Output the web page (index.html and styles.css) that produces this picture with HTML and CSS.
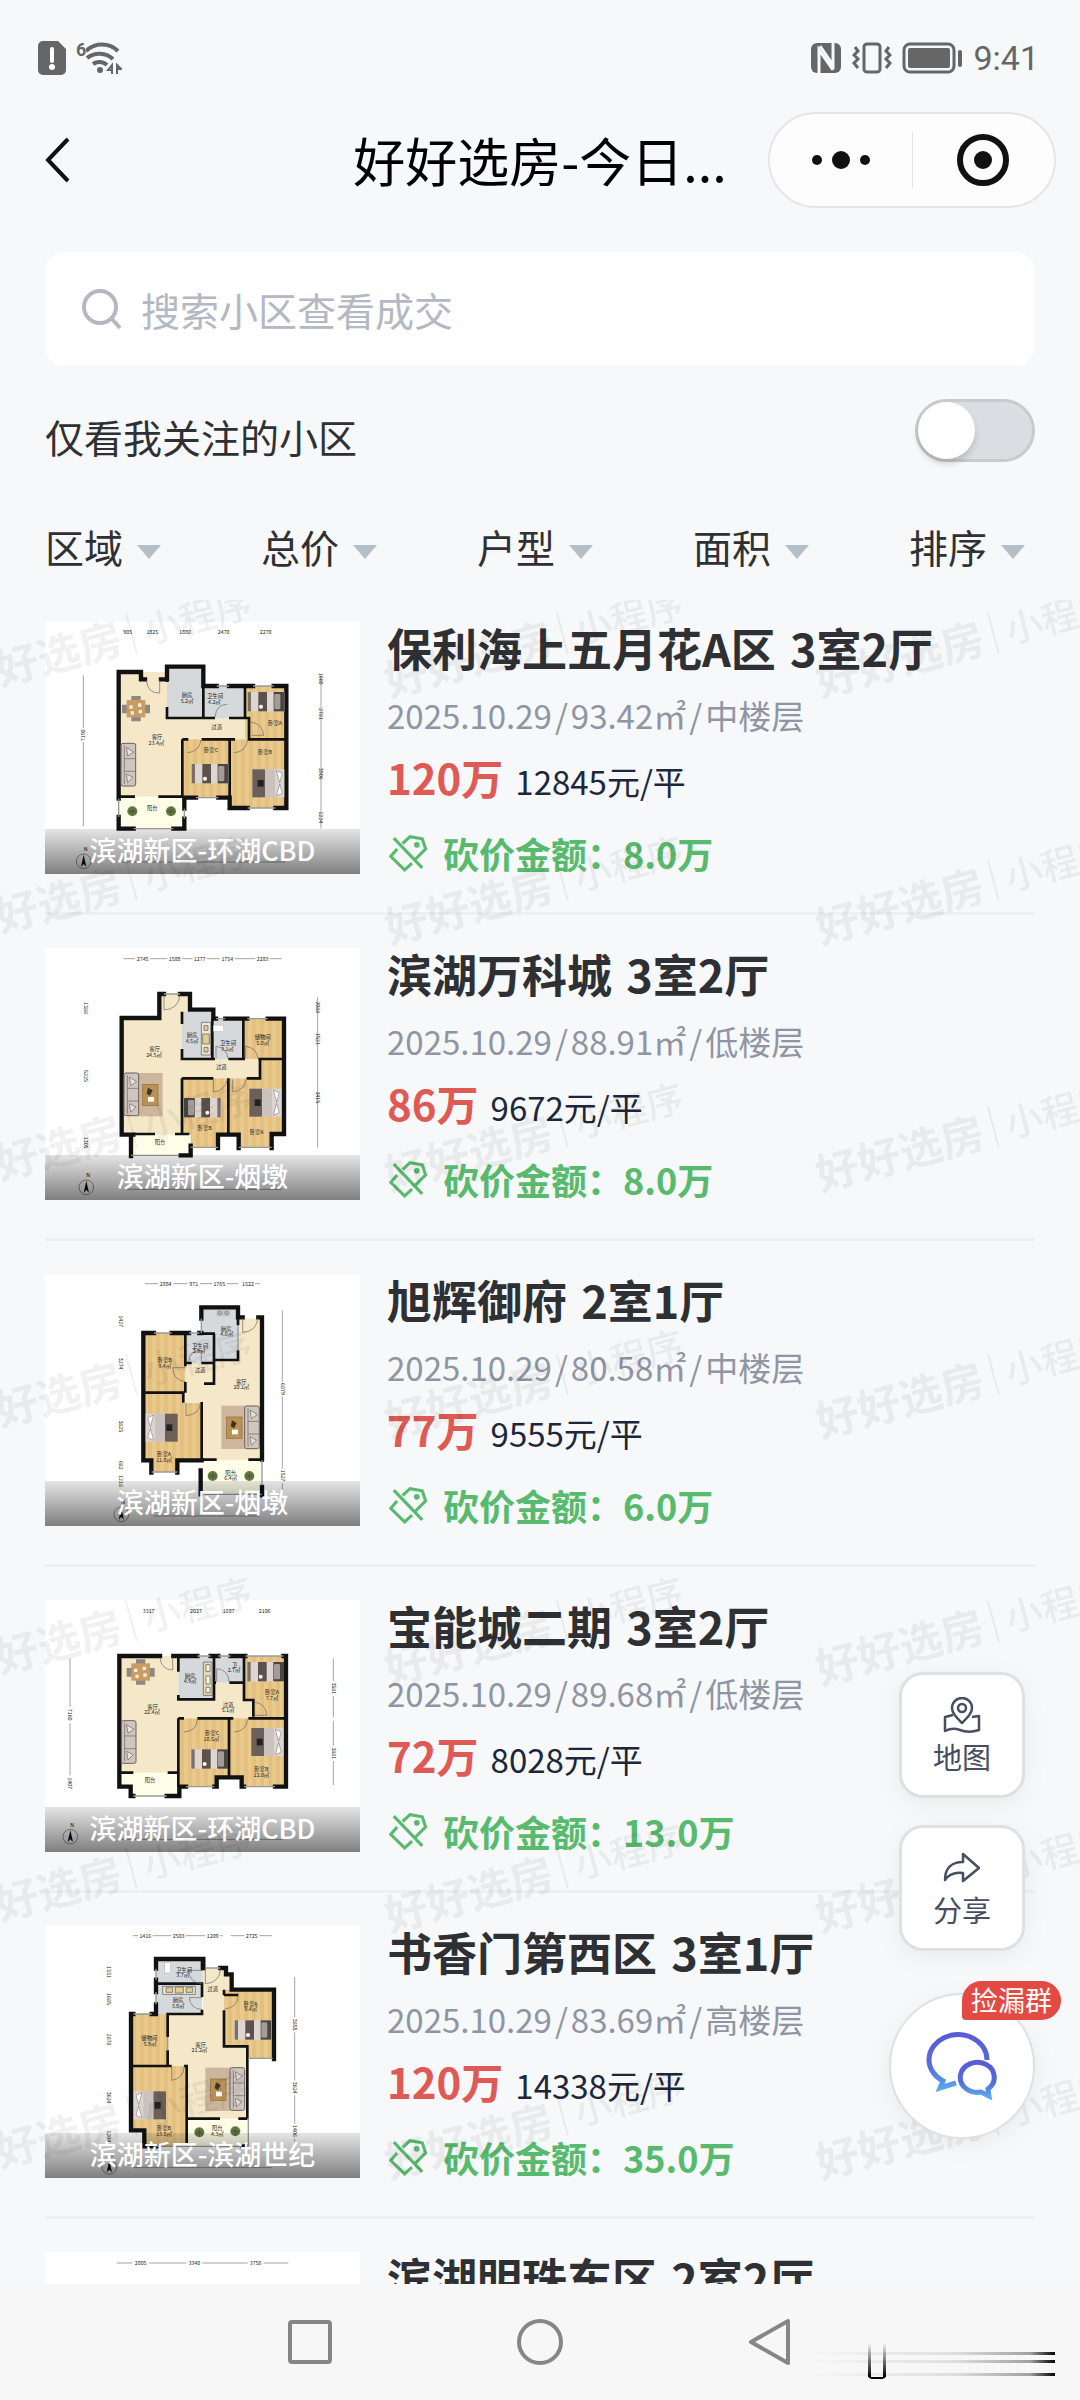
FILE: index.html
```html
<!DOCTYPE html>
<html lang="zh-CN">
  <head>
    <meta charset="UTF-8" />
    <meta name="viewport" content="width=device-width, initial-scale=1.0" />
    <title>好好选房</title>

    <link rel="stylesheet" href="styles.css">
  </head>

  <body>
    <!-- shared drawings for the floor plans -->
    <svg class="defs" aria-hidden="true">
      <defs>
        <linearGradient id="chat-color" x1="0" y1="0" x2="0" y2="1">
          <stop offset="0" stop-color="#5a5cd6" />
          <stop offset="0.6" stop-color="#566bdc" />
          <stop offset="1" stop-color="#58a6ee" />
        </linearGradient>
        <pattern id="wood" width="24" height="60" patternUnits="userSpaceOnUse">
          <rect width="24" height="60" fill="#e4c080" />
          <rect width="12" height="60" fill="#e9c98c" />
        </pattern>
        <g id="bed-s">
          <rect width="112" height="58" fill="#ddd5d1" />
          <rect x="2" width="10" height="58" fill="#7c6f66" />
          <rect x="34" width="26" height="58" fill="#5d524b" />
          <circle cx="42" cy="44" r="6" fill="#fff" />
          <rect x="80" width="32" height="58" fill="#4a4442" />
          <rect x="82" y="6" width="18" height="46" rx="4" fill="#a39c98" />
        </g>
        <g id="bed-l">
          <rect width="96" height="84" fill="#ddd5d1" />
          <rect width="38" height="84" fill="#6b5f57" />
          <rect x="16" y="32" width="18" height="20" fill="#222" />
          <rect x="38" width="30" height="84" fill="#c9c2be" />
          <path d="M72 4l18 8-8 28zM72 80l18-8-8-28z" fill="#fff" stroke="#8a8480" stroke-width="2" />
        </g>
        <g id="sofa">
          <rect width="44" height="128" rx="6" fill="#cfc6c0" stroke="#6a605b" stroke-width="3" />
          <path d="M10 6v116M10 46h34M10 84h34" stroke="#6a605b" stroke-width="2" />
          <path d="M16 12l22 14-18 12zM16 92l20 10-16 16z" fill="#e8e0db" stroke="#6a605b" stroke-width="2" />
        </g>
        <g id="dining">
          <path d="M28 0h28v76H28zM0 26h84v26H0z" fill="#8f8781" />
          <rect x="14" y="12" width="56" height="52" fill="#c99c62" />
          <path d="M22 28h10v10H22zM48 22h10v10H48zM26 46h10v10H26zM50 42h10v10H50z" fill="#f6ead8" />
        </g>
        <g id="rug">
          <rect width="76" height="130" fill="#cdb79c" />
          <rect x="16" y="34" width="46" height="64" fill="#bd9155" stroke="#8d6a3c" stroke-width="2" />
          <path d="M32 44l14 8-8 16-10-6z" fill="#3d352c" />
          <rect x="32" y="72" width="18" height="14" fill="#fff" />
        </g>
        <g id="plant">
          <circle r="15" fill="#6e7f4c" />
          <path d="M-10-8L10 8M10-8L-10 8M0-13V13M-13 0H13" stroke="#4c5c33" stroke-width="3" />
        </g>
        <g id="compass">
          <circle r="22" class="arc" />
          <path d="M0-20L8 16 0 8-8 16z" fill="#111" />
          <text y="-30">N</text>
        </g>
      </defs>
    </svg>

    <div class="status-bar">
      <div class="status-group">
        <svg width="28" height="34" viewBox="0 0 28 34"><path d="M5 0h15l8 8v21a5 5 0 0 1-5 5H5a5 5 0 0 1-5-5V5a5 5 0 0 1 5-5z" fill="#666" /><path d="M14 8v12" stroke="#fff" stroke-width="4" stroke-linecap="round" /><circle cx="14" cy="26" r="3" fill="#fff" /></svg>
        <div class="wifi">
          <span>6</span>
          <svg width="36" height="34" viewBox="9 0 36 34">
            <g fill="none" stroke="#666" stroke-width="4"><path d="M9 10a23 23 0 0 1 32 0M10 17a20 20 0 0 1 26 1M16 23a11 11 0 0 1 14 1" /></g>
            <circle cx="23" cy="29" r="3" fill="#666" /><path d="M35 33v-9l-4 5h5M40 33v-9l4 4h-4" fill="none" stroke="#666" stroke-width="2" />
          </svg>
        </div>
      </div>
      <div class="status-group">
        <svg width="31" height="32" viewBox="0 0 31 32"><rect y="1" width="30" height="30" rx="6" fill="#666" /><path d="M8 32V8l14 20M9 4l13 19V0" fill="none" stroke="#f7f8fa" stroke-width="3" /></svg>
        <svg width="40" height="32" viewBox="0 0 40 32" fill="none" stroke="#666" stroke-width="3"><rect x="12" y="2" width="16" height="28" rx="3" /><path d="M3 5l3 4-4 4 4 4-4 4 4 5M37 5l-3 4 4 4-4 4 4 4-4 5" /></svg>
        <svg width="61" height="32" viewBox="0 0 61 32"><rect x="2" y="2" width="50" height="28" rx="6" fill="none" stroke="#666" stroke-width="3" /><rect x="6" y="6" width="42" height="20" rx="2" fill="#666" /><path d="M58 10v13" stroke="#666" stroke-width="4" stroke-linecap="round" /></svg>
        <span class="time">9:41</span>
      </div>
    </div>

    <header class="header">
      <button class="back-button" aria-label="返回">
        <svg width="28" height="48" viewBox="0 0 28 48"><path d="M24 3L4 24l20 21" fill="none" stroke="#111" stroke-width="4" /></svg>
      </button>
      <h1 class="title">好好选房-今日...</h1>
      <div class="capsule">
        <button aria-label="更多">
          <svg width="60" height="20" viewBox="0 0 60 20" fill="#111"><circle cx="6" cy="10" r="5" /><circle cx="30" cy="10" r="9" /><circle cx="54" cy="10" r="5" /></svg>
        </button>
        <button aria-label="关闭">
          <svg width="54" height="54" viewBox="0 0 54 54"><circle cx="27" cy="27" r="23" fill="none" stroke="#111" stroke-width="6" /><circle cx="27" cy="27" r="9" fill="#111" /></svg>
        </button>
      </div>
    </header>

    <label class="search">
      <svg width="42" height="42" viewBox="0 0 42 42" fill="none" stroke="#b3b8c2" stroke-width="4"><circle cx="19" cy="19" r="16" /><path d="M31 31l8 9" /></svg>
      <input type="text" placeholder="搜索小区查看成交" aria-label="搜索小区">
    </label>

    <div class="follow-row">
      <label for="follow">仅看我关注的小区</label>
      <input class="switch" type="checkbox" id="follow">
    </div>

    <nav class="filters">
      <button>区域</button>
      <button>总价</button>
      <button>户型</button>
      <button>面积</button>
      <button>排序</button>
    </nav>

    <main class="main">
      <ul class="list">
        <li class="house">
          <figure class="photo">
            <svg class="plan" viewBox="0 0 945 756">
              <path class="cream" d="M221 150H366V288H612V352H412V524H221z" />
              <path class="tile" d="M366 134H475V288H366zM475 192H600V288H475z" />
              <path class="wood" d="M600 192H724V352H600zM412 352H554V527H412zM554 352H724V558H554z" />
              <path class="balcony" d="M221 524H417V620H221z" />
              <path class="wall" d="M221 530V150H288V172H300M348 172H366V134H475V192H515M552 192H624M686 192H724V558H691M608 558H554V527H520M453 527H418V560M418 590V620H385M266 620H221V585" />
              <path class="inner" d="M366 134V180M366 255V288H475V134M475 288H510M552 288H600V192M600 288H612V352H724M412 352H430M470 352H570M412 352V524H340M221 524H270M554 352V527" />
              <path class="window" d="M515 192H552M624 192H686M608 558H691M453 527H520M266 620H385M221 530V585M418 560V590" />
              <path class="arc" d="M304 175q4 40 40 38v-38M510 285q4-38 36-38M428 392q34-2 40-38M568 392q34-2 40-38M618 300q34 4 38 40h-36" />
              <use href="#dining" x="231" y="222" />
              <use href="#sofa" x="228" y="364" />
              <use href="#bed-s" x="606" y="210" />
              <use href="#bed-s" x="438" y="426" />
              <use href="#bed-l" x="622" y="442" />
              <use href="#plant" x="262" y="568" />
              <use href="#plant" x="378" y="568" />
              <text x="336" y="350">客厅</text><text x="334" y="370">23.4㎡</text>
              <text x="426" y="226">厨房</text><text x="426" y="244">5.2㎡</text>
              <text x="510" y="228">卫生间</text><text x="508" y="246">4.2㎡</text>
              <text x="515" y="322">过道</text><text x="690" y="310">卧室A</text>
              <text x="498" y="390">卧室C</text><text x="660" y="396">卧室B</text><text x="322" y="564">阳台</text>
              <text x="248" y="36">905</text><text x="322" y="36">1825</text><text x="420" y="36">1880</text><text x="536" y="36">2470</text><text x="662" y="36">2270</text>
              <path class="ruler" d="M115 160V318M115 360V612M828 160V620" />
              <text transform="translate(120 340) rotate(-90)">7190</text><text transform="translate(822 170) rotate(90)">1660</text><text transform="translate(822 276) rotate(90)">2781</text><text transform="translate(822 455) rotate(90)">3906</text><text transform="translate(822 586) rotate(90)">1224</text>
              <path class="ruler" d="M230 720H720" />
              <use href="#compass" x="116" y="718" />
            </svg>
            <figcaption>滨湖新区-环湖CBD</figcaption>
          </figure>
          <div class="info">
            <h2>保利海上五月花A区 <span>3室2厅</span></h2>
            <p class="meta">2025.10.29<i>/</i>93.42㎡<i>/</i>中楼层</p>
            <p class="price"><strong>120万</strong>12845元/平</p>
            <p class="cut"><svg class="tag" viewBox="0 0 112 112"><path d="M14 12L98 100M40 28L62 8l36 6 10 30-32 32M24 44L5 66l41 40 22-20" /><circle cx="82" cy="32" r="4" /></svg>砍价金额：8.0万</p>
          </div>
        </li>

        <li class="house">
          <figure class="photo">
            <svg class="plan" viewBox="135 52 945 756">
              <path class="cream" d="M365 262H484V190H570V243H546V385H780V443H546V612H365z" />
              <path class="tile" d="M546 243H637V385H546zM637 265H730V385H637z" />
              <path class="wood" d="M730 265H850V385H730zM546 443H685V612H654V650H572V612H546zM685 443H780V385H850V610H815V650H716V612H685z" />
              <path class="balcony" d="M393 612H568V675H393z" />
              <path class="wall" d="M400 612H365V262H478V190H492M540 190H570V237H640V264H648M676 264H742M803 264H852V610H815V652M716 652V612H654V652M572 645V674H542M393 676V612" />
              <path class="inner" d="M546 243V280M546 355V385H645M685 385H735M775 385H850M637 264V385M730 264V385M780 385V443H740M546 443H640M685 443V612M546 443V610M400 610H465M525 610H568" />
              <path class="window" d="M492 190H540M648 264H676M742 264H803M572 650H654M716 650H815M393 674H536" />
              <path class="arc" d="M492 192v46q44-2 48-46M640 446v38q36-4 42-38M698 446v38q36-4 40-38M648 383v-36q32 4 36 36M736 383v-36q34 4 38 36" />
              <use href="#rug" x="412" y="427" />
              <use href="#sofa" x="372" y="427" />
              <path d="M604 275h28v98h-28z" fill="#ece8dc" stroke="#555" stroke-width="2" />
              <path d="M612 285h12v14h-12zM608 310h20v30h-20zM612 350h12v14h-12z" fill="#e6cf8d" stroke="#555" stroke-width="2" />
              <rect x="640" y="284" width="30" height="18" fill="#fff" stroke="#aaa" />
              <use href="#bed-s" transform="translate(664 502) scale(-1 1)" />
              <use href="#bed-l" x="748" y="474" />
              <text x="464" y="362">客厅</text><text x="462" y="378">24.5㎡</text>
              <text x="576" y="320">厨房</text><text x="576" y="336">4.5㎡</text>
              <text x="684" y="344">卫生间</text><text x="682" y="360">3.1㎡</text>
              <text x="788" y="326">储物间</text><text x="788" y="342">5.0㎡</text>
              <text x="664" y="414">过道</text><text x="614" y="598">卧室B</text><text x="770" y="610">卧室A</text><text x="480" y="640">阳台</text>
              <path class="ruler" d="M370 84H405M450 84H502M546 84H578M620 84H660M704 84H766M810 84H845M953 200V650M380 776H845" />
              <text x="428" y="90">2745</text><text x="524" y="90">1588</text><text x="599" y="90">1277</text><text x="682" y="90">1754</text><text x="788" y="90">2283</text>
              <text transform="translate(252 232) rotate(90)">1388</text><text transform="translate(252 436) rotate(90)">5225</text><text transform="translate(252 636) rotate(90)">1305</text>
              <text transform="translate(947 230) rotate(90)">2088</text><text transform="translate(947 325) rotate(90)">1521</text><text transform="translate(947 500) rotate(90)">3415</text>
              <use href="#compass" x="259" y="770" />
            </svg>
            <figcaption>滨湖新区-烟墩</figcaption>
          </figure>
          <div class="info">
            <h2>滨湖万科城 <span>3室2厅</span></h2>
            <p class="meta">2025.10.29<i>/</i>88.91㎡<i>/</i>低楼层</p>
            <p class="price"><strong>86万</strong>9672元/平</p>
            <p class="cut"><svg class="tag" viewBox="0 0 112 112"><path d="M14 12L98 100M40 28L62 8l36 6 10 30-32 32M24 44L5 66l41 40 22-20" /><circle cx="82" cy="32" r="4" /></svg>砍价金额：8.0万</p>
          </div>
        </li>

        <li class="house">
          <figure class="photo">
            <svg class="plan" viewBox="135 71 945 756">
              <path class="cream" d="M556 340H645V330H714V205H786V628H605V460H556z" />
              <path class="tile" d="M604 171H714V330H645V248H604zM556 250H642V340H556z" />
              <path class="wood" d="M430 248H556V427H430zM430 427H550V458H605V630H532V665H455V630H430z" />
              <path class="balcony" d="M605 630H786V732H605z" />
              <path class="wall" d="M430 427V248H462M515 248H567M598 248H604M604 205V171H714V201H728M775 201H786V628M430 427V630H454V667M532 667V630H605M602 660V732M786 710V735" />
              <path class="inner" d="M430 427H550V457M556 250V348M556 395V427M560 338H575M604 338H642V400H612M645 250H600M642 250V338M642 329H714V300M605 455V630M605 628H650M745 628H786M714 201V225" />
              <path class="window" d="M604 205V248M462 248H515M567 248H598M714 225V300M455 665H532M605 732H786M786 630V705" />
              <path class="arc" d="M728 202v44q42-2 46-44M556 352h-38q2 38 38 42M558 458v38q38-2 44-38M566 336q2-36 38-36v36" />
              <path d="M650 180h40v18h-40z" fill="#bfc3c6" /><circle cx="659" cy="188" r="5" class="arc" /><circle cx="680" cy="188" r="5" class="arc" />
              <use href="#rug" x="664" y="466" />
              <use href="#sofa" x="734" y="467" />
              <use href="#bed-l" transform="translate(533 490) scale(-1 1)" />
              <use href="#plant" x="638" y="677" />
              <use href="#plant" x="748" y="677" />
              <text x="494" y="336">卧室B</text><text x="494" y="354">9.4㎡</text>
              <text x="600" y="292">卫生间</text><text x="597" y="308">2.9㎡</text>
              <text x="678" y="242">厨房</text><text x="680" y="258">4.6㎡</text>
              <text x="600" y="366">过道</text><text x="724" y="400">客厅</text><text x="724" y="416">20.1㎡</text>
              <text x="492" y="618">卧室A</text><text x="492" y="634">11.8㎡</text><text x="692" y="674">阳台</text><text x="692" y="690">6.4㎡</text>
              <path class="ruler" d="M435 100H474M520 100H562M600 100H636M680 100H715M765 100H780M847 180V395M847 438V655M847 698V720M460 797H780" />
              <text x="497" y="106">2884</text><text x="581" y="106">971</text><text x="658" y="106">1765</text><text x="744" y="106">1522</text>
              <text transform="translate(358 213) rotate(90)">1427</text><text transform="translate(358 340) rotate(90)">3274</text><text transform="translate(358 528) rotate(90)">3825</text><text transform="translate(358 645) rotate(90)">682</text><text transform="translate(358 692) rotate(90)">1218</text>
              <text transform="translate(842 416) rotate(90)">6879</text><text transform="translate(842 676) rotate(90)">1527</text>
              <use href="#compass" x="364" y="792" />
            </svg>
            <figcaption>滨湖新区-烟墩</figcaption>
          </figure>
          <div class="info">
            <h2>旭辉御府 <span>2室1厅</span></h2>
            <p class="meta">2025.10.29<i>/</i>80.58㎡<i>/</i>中楼层</p>
            <p class="price"><strong>77万</strong>9555元/平</p>
            <p class="cut"><svg class="tag" viewBox="0 0 112 112"><path d="M14 12L98 100M40 28L62 8l36 6 10 30-32 32M24 44L5 66l41 40 22-20" /><circle cx="82" cy="32" r="4" /></svg>砍价金额：6.0万</p>
          </div>
        </li>

        <li class="house">
          <figure class="photo">
            <svg class="plan" viewBox="135 60 945 756">
              <path class="cream" d="M358 228H535V358H645V308H732V360H760V415H535V578H358z" />
              <path class="tile" d="M535 228H642V358H535zM642 228H732V308H642z" />
              <path class="wood" d="M732 228H856V415H760V360H732zM535 415H687V592H650V620H535zM687 415H856V620H730V592H687z" />
              <path class="balcony" d="M358 578H535V648H392V620H358z" />
              <path class="wall" d="M480 228H358V620H392V648H400M500 648H538V620H558M643 620H650V592H725V620H732M825 620H858V228H850M520 228H592M632 228H655M692 228H736" />
              <path class="inner" d="M535 228V275M535 345V358H642V228M642 308H648M688 308H732V228M732 308V360H760V410M745 415H856M592 415H700M535 415H552M535 415V620M687 415V592M360 578H400M503 578H535" />
              <path class="window" d="M592 228H632M655 228H692M736 228H850M558 620H643M732 620H825M400 648H500" />
              <path class="arc" d="M480 232q2 36 38 38v-38M650 306v-40q34 2 38 40M762 366q36 4 38 40h-36M552 456q38-2 40-38M702 456q38-2 40-38" />
              <use href="#dining" x="380" y="238" />
              <use href="#sofa" x="364" y="422" />
              <path d="M610 246h26v100h-26z" fill="#e4d7b3" stroke="#555" stroke-width="2" />
              <path d="M618 254h12v20h-12zM618 288h12v24h-12zM618 322h12v16h-12z" fill="#f6f2e6" stroke="#555" stroke-width="2" />
              <use href="#bed-s" x="740" y="246" />
              <use href="#bed-s" x="572" y="508" />
              <use href="#bed-l" x="754" y="444" />
              <text x="458" y="386">客厅</text><text x="456" y="403">22.4㎡</text>
              <text x="570" y="294">厨房</text><text x="570" y="310">4.9㎡</text>
              <text x="704" y="260">卫</text><text x="702" y="276">2.7㎡</text>
              <text x="684" y="380">过道</text><text x="684" y="396">5.1㎡</text><text x="816" y="342">卧室A</text><text x="816" y="359">7.7㎡</text>
              <text x="636" y="466">卧室C</text><text x="634" y="482">10.5㎡</text><text x="784" y="574">卧室B</text><text x="784" y="590">12.0㎡</text><text x="450" y="606">阳台</text>
              <text x="446" y="99">3317</text><text x="588" y="99">2027</text><text x="686" y="99">1687</text><text x="794" y="99">2106</text>
              <path class="ruler" d="M210 235V380M210 430V586M1000 235V302M1000 348V412M1000 422V497M1000 543V615M365 778H850" />
              <text transform="translate(205 404) rotate(90)">7160</text><text transform="translate(205 610) rotate(90)">1407</text><text transform="translate(995 325) rotate(90)">3581</text><text transform="translate(995 520) rotate(90)">3881</text>
              <use href="#compass" x="211" y="770" />
            </svg>
            <figcaption>滨湖新区-环湖CBD</figcaption>
          </figure>
          <div class="info">
            <h2>宝能城二期 <span>3室2厅</span></h2>
            <p class="meta">2025.10.29<i>/</i>89.68㎡<i>/</i>低楼层</p>
            <p class="price"><strong>72万</strong>8028元/平</p>
            <p class="cut"><svg class="tag" viewBox="0 0 112 112"><path d="M14 12L98 100M40 28L62 8l36 6 10 30-32 32M24 44L5 66l41 40 22-20" /><circle cx="82" cy="32" r="4" /></svg>砍价金额：13.0万</p>
          </div>
        </li>

        <li class="house">
          <figure class="photo">
            <svg class="plan" viewBox="135 77 945 756">
              <path class="cream" d="M503 341H608V203H665L692 222V268H672V438H742V655H560V497H503z" />
              <path class="tile" d="M468 176H608V250H468zM468 250H606V341H468z" />
              <path class="wood" d="M672 268H822V474H742V438H672zM393 341H503V497H393zM393 497H560V738H433V690H393z" />
              <path class="balcony" d="M562 655H745V738H562z" />
              <path class="wall" d="M468 205V176H610V203M468 238V275M468 312V341H455M400 341H393V690H433V738H470M661 203H678V222H695V268H822V476M728 738H738" />
              <path class="inner" d="M468 250H606V290M606 328V341H503V410M503 450V497H393M503 497H515M552 497H560V735M672 268V285M672 330V438H742V655M562 655H660M715 655H742M742 438V475M672 284H715M606 176V210" />
              <path class="window" d="M468 205V238M468 275V312M400 341H455M615 203H661M745 474H818M745 655V738M470 738H725M503 410V450" />
              <path class="arc" d="M616 206v44q42-2 46-44M606 250q-38-2-40-40h40M606 328q-36-4-38-36h38M714 288q-2 34-40 38M515 498v42q34-4 38-42" />
              <path d="M488 258h98v24h-98z" fill="#ece8dc" stroke="#555" stroke-width="2" />
              <path d="M498 262h20v14h-20zM526 260h24v18h-24zM558 262h20v14h-20z" fill="#e6cf8d" stroke="#555" stroke-width="2" />
              <rect x="494" y="186" width="18" height="32" fill="#fff" stroke="#888" />
              <use href="#rug" x="616" y="502" />
              <use href="#sofa" x="690" y="502" />
              <use href="#bed-s" x="702" y="360" />
              <use href="#bed-l" transform="translate(498 573) scale(-1 1)" />
              <use href="#plant" x="598" y="696" />
              <use href="#plant" x="706" y="693" />
              <text x="552" y="214">卫生间</text><text x="548" y="230">3.7㎡</text>
              <text x="534" y="306">厨房</text><text x="534" y="322">3.8㎡</text>
              <text x="638" y="272">过道</text><text x="752" y="316">卧室A</text><text x="752" y="332">9.4㎡</text>
              <text x="448" y="418">储物间</text><text x="450" y="436">5.9㎡</text><text x="602" y="440">客厅</text><text x="598" y="456">21.2㎡</text>
              <text x="492" y="690">卧室B</text><text x="492" y="706">13.5㎡</text><text x="652" y="690">阳台</text><text x="652" y="707">4.3㎡</text>
              <path class="ruler" d="M398 106H414M458 106H514M558 106H616M660 106H668M692 106H733M778 106H816M884 230V350M884 396V540M884 585V670M884 715V740M400 802H816" />
              <text x="436" y="112">1416</text><text x="536" y="112">2503</text><text x="638" y="112">1209</text><text x="755" y="112">2725</text>
              <text transform="translate(321 215) rotate(90)">1331</text><text transform="translate(321 296) rotate(90)">1685</text><text transform="translate(321 418) rotate(90)">2878</text><text transform="translate(321 592) rotate(90)">3624</text><text transform="translate(321 708) rotate(90)">1204</text>
              <text transform="translate(879 373) rotate(90)">3855</text><text transform="translate(879 562) rotate(90)">3624</text><text transform="translate(879 692) rotate(90)">1406</text>
              <use href="#compass" x="328" y="800" />
            </svg>
            <figcaption>滨湖新区-滨湖世纪</figcaption>
          </figure>
          <div class="info">
            <h2>书香门第西区 <span>3室1厅</span></h2>
            <p class="meta">2025.10.29<i>/</i>83.69㎡<i>/</i>高楼层</p>
            <p class="price"><strong>120万</strong>14338元/平</p>
            <p class="cut"><svg class="tag" viewBox="0 0 112 112"><path d="M14 12L98 100M40 28L62 8l36 6 10 30-32 32M24 44L5 66l41 40 22-20" /><circle cx="82" cy="32" r="4" /></svg>砍价金额：35.0万</p>
          </div>
        </li>

        <li class="house">
          <figure class="photo">
            <svg class="plan" viewBox="0 0 945 756">
              <path class="ruler" d="M215 33H262M312 33H424M472 33H608M656 33H730" />
              <text x="287" y="39">2805</text><text x="448" y="39">3340</text><text x="632" y="39">3756</text>
            </svg>
          </figure>
          <div class="info">
            <h2>滨湖明珠东区 <span>2室2厅</span></h2>
          </div>
        </li>
      </ul>

      <svg class="watermark" aria-hidden="true">
        <defs>
          <pattern id="mark" x="-55" y="-35" width="431" height="247" patternUnits="userSpaceOnUse">
            <g transform="translate(14 132) rotate(-15)">
              <text class="mark-bold" x="0" y="0">好好选房</text>
              <path d="M183 4V-38" stroke="#000" stroke-width="2" />
              <text class="mark-thin" x="196" y="-2">小程序</text>
            </g>
          </pattern>
        </defs>
        <rect width="100%" height="100%" fill="url(#mark)" />
      </svg>

      <aside class="float-buttons">
        <button class="float-button">
          <svg width="38" height="36" viewBox="0 0 38 36" fill="none" stroke="#474e5f" stroke-width="2.5" stroke-linejoin="round"><path d="M19 26C13 20 9 16 9 11a10 10 0 0 1 20 0c0 5-4 9-10 15z" /><circle cx="19" cy="11" r="4" /><path d="M10 18l-8 2v14c6-3 10-3 15-1s10 3 19 0V19l-7 1" /></svg>
          地图
        </button>
        <button class="float-button">
          <svg width="38" height="36" viewBox="0 0 38 36" fill="none" stroke="#474e5f" stroke-width="2.5" stroke-linejoin="round"><path d="M20 4l16 14-16 13v-8C12 22 6 24 2 30 2 18 9 12 20 12z" /></svg>
          分享
        </button>
        <button class="chat-button" aria-label="捡漏群">
          <svg width="74" height="68" viewBox="0 0 74 68" fill="none" stroke="url(#chat-color)" stroke-width="5"><path d="M62 28A29 25 0 1 0 18 49l-3 7 16-5" /><path d="M63 57a17 15 0 1 0-7 3l8 4z" /></svg>
          <span class="badge">捡漏群</span>
        </button>
      </aside>
    </main>

    <footer class="system-nav">
      <button aria-label="最近任务"><svg width="48" height="48" viewBox="0 0 48 48"><rect x="4" y="4" width="40" height="40" rx="2" /></svg></button>
      <button aria-label="主屏幕"><svg width="48" height="48" viewBox="0 0 48 48"><circle cx="24" cy="24" r="21" /></svg></button>
      <button aria-label="返回上一级"><svg width="48" height="48" viewBox="0 0 48 48"><path d="M42 3v42L5 24z" /></svg></button>
      <svg class="streaks" width="250" height="48" viewBox="0 0 250 48" aria-hidden="true">
        <defs>
          <linearGradient id="fade-x"><stop offset="0" stop-color="#000" stop-opacity="0" /><stop offset="0.6" stop-color="#000" stop-opacity="0.1" /><stop offset="0.9" stop-color="#000" stop-opacity="0.35" /><stop offset="1" stop-color="#000" /></linearGradient>
          <linearGradient id="fade-y" x1="0" y1="0" x2="0" y2="1"><stop offset="0" stop-color="#000" stop-opacity="0" /><stop offset="1" stop-color="#000" /></linearGradient>
        </defs>
        <g fill="url(#fade-x)"><rect y="17" width="250" height="3" /><rect y="25" width="250" height="3" /><rect y="38" width="250" height="3" /></g>
        <g fill="url(#fade-y)"><rect x="63" y="8" width="3" height="34" /><rect x="78" y="8" width="3" height="34" /></g>
        <path d="M64 40q0 3 4 3h8q4 0 4-3" fill="none" stroke="#000" stroke-width="2" />
      </svg>
    </footer>
  </body>
</html>
```
FILE: styles.css
```css
*{
  box-sizing: border-box;
}

body{
  display: flex;
  flex-direction: column;
  height: 100vh;
  margin: 0;
  background-color: #f7f8fa;
  color: #2f3033;
  font-family: "Noto Sans CJK SC", sans-serif;
  overflow: hidden;
}

button{
  padding: 0;
  border: none;
  background: none;
  color: inherit;
  font-family: inherit;
  cursor: pointer;
}

svg{
  display: block;
}

.defs{
  position: absolute;
  width: 0;
  height: 0;
}

/* top of the phone */

.status-bar{
  display: flex;
  justify-content: space-between;
  height: 112px;
  padding: 0 41px 0 38px;
  color: #666;
}

.status-group{
  display: flex;
  align-items: center;
  gap: 10px;
  height: 116px;
}

.wifi{
  display: flex;
  align-items: flex-start;
  font-family: Roboto, sans-serif;
  font-size: 18px;
  font-weight: bold;
  line-height: 18px;
}

.time{
  font-family: Roboto, sans-serif;
  font-size: 34px;
}

.header{
  display: grid;
  grid-template-columns: 1fr auto 1fr;
  align-items: center;
  height: 96px;
  padding: 0 24px;
}

.back-button{
  justify-self: start;
  padding: 0 20px;
}

.title{
  margin: 0;
  font-size: 52px;
  font-weight: normal;
  line-height: 96px;
  color: #000;
}

.capsule{
  justify-self: end;
  display: flex;
  align-items: center;
  width: 288px;
  height: 96px;
  border: 2px solid #e6e6e8;
  border-radius: 48px;
  background-color: #fdfdfd;
}

.capsule button{
  flex: 1;
  display: flex;
  justify-content: center;
  align-items: center;
  height: 56px;
}

.capsule button + button{
  border-left: 1px solid #e2e2e4;
}

.search{
  display: flex;
  align-items: center;
  gap: 18px;
  height: 114px;
  margin: 44px 45px 0;
  padding: 0 36px;
  border-radius: 20px;
  background-color: white;
}

.search input{
  flex: 1;
  min-width: 0;
  padding: 0;
  border: none;
  outline: none;
  background: none;
  font-family: inherit;
  font-size: 39px;
}

.search input::placeholder{
  color: #b3b8c2;
}

.follow-row{
  display: flex;
  justify-content: space-between;
  margin: 33px 45px 0;
  font-size: 39px;
  line-height: 74px;
  height: 64px;
}

.switch{
  appearance: none;
  width: 120px;
  height: 63px;
  margin: 0;
  border: 3px solid #c9cacd;
  border-radius: 32px;
  background-color: #dcdde2;
}

.switch::before{
  content: "";
  display: block;
  width: 57px;
  height: 57px;
  border-radius: 50%;
  background-color: white;
  box-shadow: 0 5px 6px rgba(0, 0, 0, 0.15);
}

.switch:checked::before{
  margin-left: auto;
}

.filters{
  display: grid;
  grid-template-columns: repeat(5, 1fr);
  height: 104px;
  margin-top: 33px;
}

.filters button{
  display: flex;
  align-items: center;
  gap: 14px;
  padding: 0 0 4px 45px;
  font-size: 39px;
}

.filters button::after{
  content: "";
  margin-top: 12px;
  border: 12px solid transparent;
  border-top: 14px solid #b4bec6;
  border-bottom: none;
}

/* house list */

.main{
  flex: 1;
  min-height: 0;
  position: relative;
  overflow: hidden;
}

.list{
  margin: 0;
  padding: 22px 45px 0;
  list-style: none;
}

.house{
  display: flex;
  gap: 27px;
  margin-bottom: 33px;
  padding-bottom: 38px;
  border-bottom: 3px solid #eeeff1;
}

.photo{
  position: relative;
  flex: none;
  width: 315px;
  height: 252px;
  margin: 0;
  background-color: white;
}

.photo figcaption{
  position: absolute;
  left: 0;
  right: 0;
  bottom: 0;
  height: 45px;
  background: linear-gradient(rgba(0, 0, 0, 0.1), rgba(0, 0, 0, 0.5));
  color: white;
  font-size: 27px;
  font-weight: 500;
  line-height: 42px;
  text-align: center;
}

.plan{
  width: 100%;
  height: 100%;
}

.plan text{
  font-size: 16px;
  text-anchor: middle;
  fill: #222;
}

.cream{
  fill: #f5e8c8;
}

.tile{
  fill: #d6d9db;
}

.wood{
  fill: url(#wood);
}

.balcony{
  fill: #fdfde8;
}

.wall,
.inner,
.window,
.ruler,
.arc{
  fill: none;
  stroke: #111;
}

.wall{
  stroke-width: 13;
  stroke-linecap: square;
}

.inner{
  stroke-width: 8;
}

.window{
  stroke-width: 4;
  stroke: #999;
}

.ruler{
  stroke-width: 2;
  stroke: #777;
}

.arc{
  stroke-width: 2;
  stroke: #666;
}

.info h2,
.info p{
  margin: 0;
  white-space: nowrap;
}

.info h2{
  font-size: 45px;
  line-height: 52px;
}

.info h2 span{
  margin-left: 4px;
}

.info .meta{
  margin-top: 21px;
  color: #8f95a3;
  font-size: 33px;
  line-height: 40px;
}

.meta i{
  margin: 0 3px;
  font-style: normal;
}

.info .price{
  display: flex;
  align-items: baseline;
  gap: 12px;
  margin-top: 16px;
  color: #1c273c;
  font-size: 33px;
  line-height: 52px;
}

.price strong{
  color: #e05a55;
  font-size: 42px;
}

.info .cut{
  display: flex;
  align-items: center;
  margin-top: 26px;
  color: #57ba6c;
  font-size: 36px;
  font-weight: bold;
  line-height: 40px;
}

.tag{
  width: 38px;
  height: 38px;
  margin: 0 16px 0 2px;
  fill: none;
  stroke: #57ba6c;
  stroke-width: 9;
}

.watermark{
  position: absolute;
  top: 0;
  left: 0;
  width: 100%;
  height: 100%;
  opacity: 0.05;
  pointer-events: none;
}

.mark-bold{
  font-size: 43px;
  font-weight: bold;
}

.mark-thin{
  font-size: 37px;
  font-weight: 500;
}

/* floating buttons */

.float-buttons{
  position: absolute;
  right: 45px;
  bottom: 145px;
  display: flex;
  flex-direction: column;
  align-items: center;
  gap: 27px;
}

.float-button,
.chat-button{
  display: flex;
  flex-direction: column;
  align-items: center;
  justify-content: center;
  background-color: white;
  box-shadow: 0 6px 24px rgba(0, 0, 0, 0.06);
}

.float-button{
  gap: 2px;
  width: 126px;
  height: 126px;
  padding-top: 4px;
  border: 3px solid #dfe0e3;
  border-radius: 24px;
  color: #474e5f;
  font-size: 29px;
  line-height: 42px;
}

.chat-button{
  position: relative;
  width: 146px;
  height: 146px;
  margin-top: 15px;
  border: 2px solid #dfe0e3;
  border-radius: 50%;
}

.badge{
  position: absolute;
  top: -14px;
  right: -28px;
  height: 39px;
  padding: 0 9px;
  border-radius: 20px 20px 20px 4px;
  background-color: #e24a43;
  color: white;
  font-size: 27px;
  line-height: 37px;
  white-space: nowrap;
}

.system-nav{
  position: relative;
  display: flex;
  justify-content: center;
  align-items: center;
  gap: 182px;
  height: 116px;
  background-color: #f7f7f7;
}

.system-nav button svg{
  fill: none;
  stroke: #868686;
  stroke-width: 4;
  stroke-linejoin: round;
}

.streaks{
  position: absolute;
  right: 25px;
  bottom: 17px;
}
```
